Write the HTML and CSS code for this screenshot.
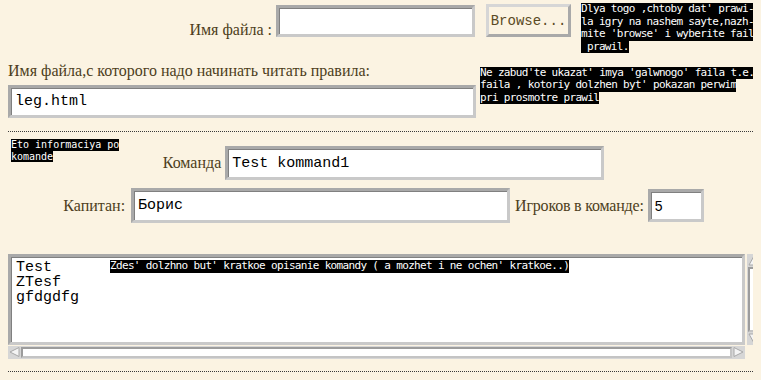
FILE: index.html
```html
<!DOCTYPE html>
<html>
<head>
<meta charset="utf-8">
<link rel="stylesheet" href="styles.css">
</head>
<body>
<div class="row1">
  <span class="lbl lbl1">Имя файла :</span>
  <input class="field f-file" type="text" value="">
  <button class="btn">Browse...</button>
  <div class="tip tip1"><span class="ln">Dlya togo ,chtoby dat' prawi-</span><span class="ln">la igry na nashem sayte,nazh-</span><span class="ln">mite 'browse' i wyberite fail</span><span class="ln"> prawil.</span></div>
</div>
<div class="row2">
  <div class="col">
    <div class="lbl lbl2">Имя файла,с которого надо начинать читать правила:</div>
    <input class="field f-start" type="text" value="leg.html">
  </div>
  <div class="tip tip2"><span class="ln">Ne zabud'te ukazat' imya 'galwnogo' faila t.e.</span><span class="ln">faila , kotoriy dolzhen byt' pokazan perwim</span><span class="ln">pri prosmotre prawil</span></div>
</div>
<div class="dots"></div>
<div class="team">
  <div class="tip tip3"><span class="ln">Eto informaciya po</span><span class="ln">komande</span></div>
  <div class="trow trow1">
    <span class="lbl">Команда</span>
    <input class="field f-team" type="text" value="Test kommand1">
  </div>
  <div class="trow trow2">
    <span class="lbl">Капитан:</span>
    <input class="field f-capt" type="text" value="Борис">
    <span class="lbl lbl-pl">Игроков в команде:</span>
    <input class="field f-num" type="text" value="5">
  </div>
</div>
<div class="ta-wrap">
  <div class="ta-box">
    <textarea class="ta">Test
ZTesf
gfdgdfg</textarea>
    <div class="tip tip4"><span class="ln">Zdes' dolzhno but' kratkoe opisanie komandy ( a mozhet i ne ochen' kratkoe..)</span></div>
  </div>
  <div class="vs">
    <svg class="arr" width="14" height="13" viewBox="0 0 14 13"><polygon points="7,2 12,11 2,11" fill="#f4f4f4" stroke="#a8a8a8" stroke-width="1"/></svg>
    <div class="track vtrack"></div>
    <svg class="arr" width="14" height="13" viewBox="0 0 14 13"><polygon points="2,2 12,2 7,11" fill="#f4f4f4" stroke="#a8a8a8" stroke-width="1"/></svg>
  </div>
  <div class="hs">
    <svg class="arr" width="13" height="12" viewBox="0 0 13 12"><polygon points="2,6 11,1.5 11,10.5" fill="#f4f4f4" stroke="#a8a8a8" stroke-width="1"/></svg>
    <div class="track htrack"></div>
    <svg class="arr" width="13" height="12" viewBox="0 0 13 12"><polygon points="11,6 2,1.5 2,10.5" fill="#f4f4f4" stroke="#a8a8a8" stroke-width="1"/></svg>
  </div>
</div>
<div class="dots dots2"></div>
</body>
</html>
```
FILE: styles.css
```css
html, body {
  background: #fbf3e2;
}
body {
  margin: 3px 8px 0 8px;
  font-family: "Liberation Serif", "Times New Roman", serif;
  font-size: 16px;
  color: #4d3e20;
  overflow: hidden;
}
.lbl {
  line-height: 18px;
  white-space: nowrap;
}
.field {
  box-sizing: border-box;
  background: #ffffff;
  border: 3px solid;
  border-color: #a9a9a9 #c9c9c9 #c9c9c9 #a9a9a9;
  box-shadow: inset 1px 1px 0 #808080;
  font-family: "Liberation Mono", "Courier New", monospace;
  font-size: 15px;
  color: #000;
  padding: 0 4px;
  margin: 0;
  outline: none;
}
.tip {
  font-family: "DejaVu Sans Mono", monospace;
  font-size: 11px;
  letter-spacing: -0.66px;
  line-height: 12.5px;
  color: #fff;
}
.tip .ln {
  display: block;
  width: fit-content;
  background: #000;
  white-space: pre;
}

/* row 1 */
.row1 {
  display: flex;
  justify-content: flex-end;
  align-items: flex-start;
  margin-right: -4px;
}
.lbl1 {
  margin-top: 18px;
  margin-right: 4px;
}
.f-file {
  width: 199px;
  height: 32px;
  margin-top: 2px;
}
.btn {
  box-sizing: border-box;
  width: 85px;
  height: 33px;
  margin: 1px 0 0 11px;
  padding: 0;
  background: #fbf3e2;
  border: 3px solid;
  border-color: #d6d6d6 #a9a9a9 #a9a9a9 #d6d6d6;
  font-family: "Liberation Mono", "Courier New", monospace;
  font-size: 14px;
  color: #5a4a24;
}
.tip1 {
  width: 176px;
  margin-left: 10px;
}

/* row 2 */
.row2 {
  display: flex;
  align-items: flex-start;
  margin-top: 9px;
  margin-right: -8px;
}
.col {
  display: flex;
  flex-direction: column;
  width: 468px;
  flex: none;
}
.f-start {
  width: 468px;
  height: 33px;
  margin-top: 5px;
}
.tip2 {
  margin-left: 4px;
  margin-top: 5px;
  line-height: 12.4px;
}

.dots {
  margin-top: 13px;
  margin-right: -8px;
  height: 0;
  border-top: 1px dotted #3a3a3a;
}

/* team section */
.team {
  position: relative;
  padding-left: 6px;
}
.tip3 {
  position: absolute;
  left: 3px;
  top: 7px;
  font-size: 10px;
  letter-spacing: 0;
  line-height: 11.7px;
}
.trow {
  display: flex;
  justify-content: center;
  align-items: center;
}
.trow1 {
  padding-top: 14px;
}
.trow1 .lbl {
  margin-right: 4px;
}
.f-team {
  width: 379px;
  height: 34px;
}
.trow2 {
  margin-top: 8px;
}
.f-capt {
  width: 379px;
  height: 35px;
  margin-left: 6px;
}
.lbl-pl {
  margin-left: 5px;
  letter-spacing: -0.2px;
}
.f-num {
  width: 56px;
  height: 33px;
  margin-left: 4px;
  font-family: "Liberation Sans", Arial, sans-serif;
  font-size: 14px;
}

/* textarea area */
.ta-wrap {
  display: grid;
  grid-template-columns: 737px 16px;
  grid-template-rows: 91px 13px;
  column-gap: 2px;
  row-gap: 1px;
  margin-top: 31px;
  margin-right: -8px;
}
.ta-box {
  position: relative;
  grid-column: 1;
  grid-row: 1;
}
.ta {
  box-sizing: border-box;
  display: block;
  width: 737px;
  height: 91px;
  margin: 0;
  padding: 3px 5px;
  resize: none;
  overflow: hidden;
  background: #fff;
  border: 3px solid;
  border-color: #a9a9a9 #c9c9c9 #c9c9c9 #a9a9a9;
  box-shadow: inset 1px 1px 0 #808080;
  font-family: "Liberation Mono", "Courier New", monospace;
  font-size: 15px;
  line-height: 15px;
  color: #000;
  outline: none;
}
.tip4 {
  position: absolute;
  left: 102px;
  top: 6px;
  line-height: 12.8px;
}
.vs {
  grid-column: 2;
  grid-row: 1;
  display: flex;
  flex-direction: column;
  background: #d6d6d6;
}
.arr {
  flex: none;
  display: block;
}
.track {
  flex: 1;
  background: #fff;
  border: 2px solid;
  border-color: #9c9c9c #c4c4c4 #c4c4c4 #9c9c9c;
}
.vtrack {
  margin: 0 3px 0 1px;
}
.hs {
  grid-column: 1;
  grid-row: 2;
  display: flex;
  align-items: stretch;
  background: #d6d6d6;
}
.htrack {
  margin: 1px 0;
}
.dots2 {
  margin-top: 12px;
}
```
